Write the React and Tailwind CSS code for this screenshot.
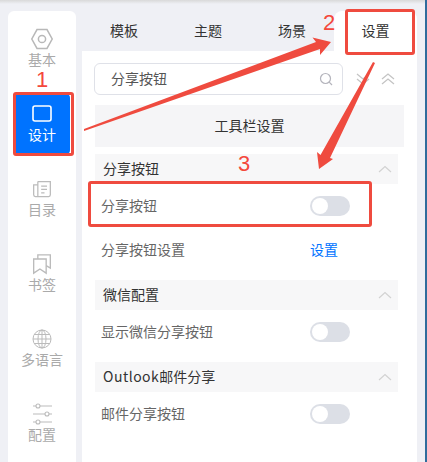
const FONT = "font-['Noto_Sans_CJK_SC','Noto_Sans',sans-serif]";

function HexIcon() {
  return (
    <svg width="24" height="24" viewBox="0 0 24 24" fill="none" stroke="#b8b8b8" strokeWidth="1.5">
      <path d="M7 2.600h10l5.200 9.400L17 21.400H7L1.800 12z" />
      <circle cx="12" cy="12" r="3.600" />
    </svg>
  );
}
function ScreenIcon() {
  return (
    <svg width="24" height="24" viewBox="0 0 24 24" fill="none" stroke="#ffffff" strokeWidth="1.6">
      <rect x="3" y="4" width="18" height="15" rx="2" />
    </svg>
  );
}
function DocIcon() {
  return (
    <svg width="20" height="20" viewBox="0 0 24 24" fill="none" stroke="#bbbbbb" strokeWidth="1.500">
      <path d="M7 3h15v16a2 2 0 0 1-2 2H4a2 2 0 0 1-2-2V7h5" />
      <path d="M7 3v18" />
      <path d="M11 8.500h7M11 12.500h7M11 16.500h4" />
    </svg>
  );
}
function BookmarkIcon() {
  return (
    <svg width="20" height="22" viewBox="0 0 24 26" fill="none" stroke="#bbbbbb" strokeWidth="1.600">
      <path d="M2 7h15v17l-7.500-5L2 24z" />
      <path d="M7 7V2h15v16l-5-3" />
    </svg>
  );
}
function GlobeIcon() {
  return (
    <svg width="24" height="24" viewBox="0 0 24 24" fill="none" stroke="#bbbbbb" strokeWidth="1">
      <circle cx="12" cy="12" r="9" />
      <ellipse cx="12" cy="12" rx="4" ry="9" />
      <path d="M12 3v18M3 12h18M4.200 7.500h15.600M4.200 16.500h15.600" />
    </svg>
  );
}
function SliderIcon() {
  return (
    <svg width="24" height="24" viewBox="0 0 24 24" fill="none" stroke="#bbbbbb" strokeWidth="1.100">
      <path d="M3 4h3M10 4h12M3 12h12M19 12h3M3 20h3M10 20h12" />
      <circle cx="8" cy="4" r="2" />
      <circle cx="17" cy="12" r="2" />
      <circle cx="8" cy="20" r="2" />
    </svg>
  );
}

function NavItem({ icon, label, active }) {
  return (
    <div
      className={
        "mx-auto flex h-[60px] w-14 flex-col items-center rounded-sm pt-2 " +
        (active ? "bg-[#0073ff] text-white" : "text-[#aaaaaa]")
      }
    >
      <div className="flex h-6 items-center justify-center">{icon}</div>
      <span className="whitespace-nowrap text-sm leading-[16px]">{label}</span>
    </div>
  );
}

function Toggle() {
  return (
    <div className="flex h-5 w-10 items-center rounded-full bg-[#dcdfe6] pl-[2px]">
      <div className="h-4 w-4 rounded-full bg-white" />
    </div>
  );
}

function Section({ title, className = "mt-2" }) {
  return (
    <div className={"flex h-[30px] w-[303px] items-center justify-between bg-[#f7f7f8] pl-2 pr-[6px] " + className}>
      <span className="pb-[2px] text-sm text-[#333333]">{title}</span>
      <svg width="14" height="8" viewBox="0 0 14 8" fill="none" stroke="#d2d2d2" strokeWidth="1.200">
        <path d="M1 7l6-5.500L13 7" />
      </svg>
    </div>
  );
}

function Row({ label, children }) {
  return (
    <div className="relative flex h-11 w-[303px] items-center justify-between pl-[6px]">
      <span className="pb-[2px] text-sm text-[#666666]">{label}</span>
      <div className="absolute left-[215px] top-1/2 -translate-y-1/2">{children}</div>
    </div>
  );
}

function Annotations() {
  const red = "#ef4b3f";
  return (
    <>
      <div className="absolute left-[13px] top-[92px] h-[64px] w-[61px] rounded-[3px] border-[3px] border-[#ef4b3f]" />
      <div className="absolute left-[345px] top-[9px] h-[46px] w-[70px] rounded-[3px] border-[3px] border-[#ef4b3f]" />
      <div className="absolute left-[88px] top-[181px] h-[46px] w-[284px] rounded-[3px] border-[3px] border-[#ef4b3f]" />
      <svg className="absolute left-0 top-0" width="427" height="462" viewBox="0 0 427 462" fill={red}>
        <path d="M84 129L316 42L312.500 37.500L331 42L320 55L320 49L84 131z" />
        <path d="M373 62L375 63L330 158L333 159L319 169L317 152L320.500 155z" />
      </svg>
      <span className="absolute left-[36px] top-[71px] font-['Liberation_Sans',sans-serif] text-[22px] leading-[18px] text-[#f4483c]">1</span>
      <span className="absolute left-[323px] top-[10px] font-['Liberation_Sans',sans-serif] text-[22px] leading-[26px] text-[#f4483c]">2</span>
      <span className="absolute left-[238px] top-[151px] font-['Liberation_Sans',sans-serif] text-[22px] leading-[26px] text-[#f4483c]">3</span>
    </>
  );
}

export default function App() {
  return (
    <div className={"relative flex h-[462px] w-[427px] flex-col overflow-hidden bg-[#eff0f5] " + FONT}>
      <div className="h-[4px] shrink-0 bg-gradient-to-b from-[#d9d9d9] to-[#eff0f5]" />
      <div className="flex min-h-0 flex-1 pt-[7px]">
        <aside className="ml-2 flex h-full w-[68px] shrink-0 flex-col gap-[15px] rounded-t-md bg-white pt-2">
          <NavItem icon={<HexIcon />} label="基本" />
          <NavItem icon={<ScreenIcon />} label="设计" active />
          <NavItem icon={<DocIcon />} label="目录" />
          <NavItem icon={<BookmarkIcon />} label="书签" />
          <NavItem icon={<GlobeIcon />} label="多语言" />
          <NavItem icon={<SliderIcon />} label="配置" />
        </aside>

        <main className="ml-[6px] flex w-[335px] shrink-0 flex-col">
          <div className="flex h-10 shrink-0 text-sm text-[#333333]">
            <div className="flex w-[84px] items-center justify-center pb-[2px]">模板</div>
            <div className="flex w-[84px] items-center justify-center pb-[2px]">主题</div>
            <div className="flex w-[84px] items-center justify-center pb-[2px]">场景</div>
            <div className="flex w-[83px] items-center justify-center rounded-t-lg bg-white pb-[2px]">设置</div>
          </div>
          <div className="flex-1 bg-white pl-[13px] pt-3">
            <div className="flex items-center">
              <div className="-ml-px flex h-8 w-[249px] items-center justify-between rounded-md border border-[#dfe1e8] pl-4 pr-[9px]">
                <span className="pb-[2px] text-sm text-[#555555]">分享按钮</span>
                <svg width="14" height="14" viewBox="0 0 14 14" fill="none" stroke="#b4b4bc" strokeWidth="1.200">
                  <circle cx="6.500" cy="6.500" r="5" />
                  <path d="M10.200 10.200L13 13" />
                </svg>
              </div>
              <svg className="ml-[13px]" width="14" height="14" viewBox="0 0 14 14" fill="none" stroke="#c4c4c4" strokeWidth="1.300">
                <path d="M1 2l6 5 6-5M1 7l6 5 6-5" />
              </svg>
              <svg className="ml-[11px]" width="14" height="14" viewBox="0 0 14 14" fill="none" stroke="#c4c4c4" strokeWidth="1.300">
                <path d="M1 7l6-5 6 5M1 12l6-5 6 5" />
              </svg>
            </div>
            <div className="mt-[10px] flex h-[42px] w-[309px] items-center justify-center bg-[#f5f5f7] pb-[2px] text-sm text-[#333333]">
              工具栏设置
            </div>
            <Section title="分享按钮" className="mt-[7px]" />
            <Row label="分享按钮"><Toggle /></Row>
            <Row label="分享按钮设置"><span className="block pb-[2px] text-sm text-[#0073ff]">设置</span></Row>
            <Section title="微信配置" />
            <Row label="显示微信分享按钮"><Toggle /></Row>
            <Section title={<><span className="tracking-[0.5px]">Outlook</span>邮件分享</>} />
            <Row label="邮件分享按钮"><Toggle /></Row>
          </div>
        </main>

        <div className="ml-auto -mt-[11px] w-[2px] shrink-0 bg-[#2f6c9c]" />
      </div>
      <Annotations />
    </div>
  );
}
